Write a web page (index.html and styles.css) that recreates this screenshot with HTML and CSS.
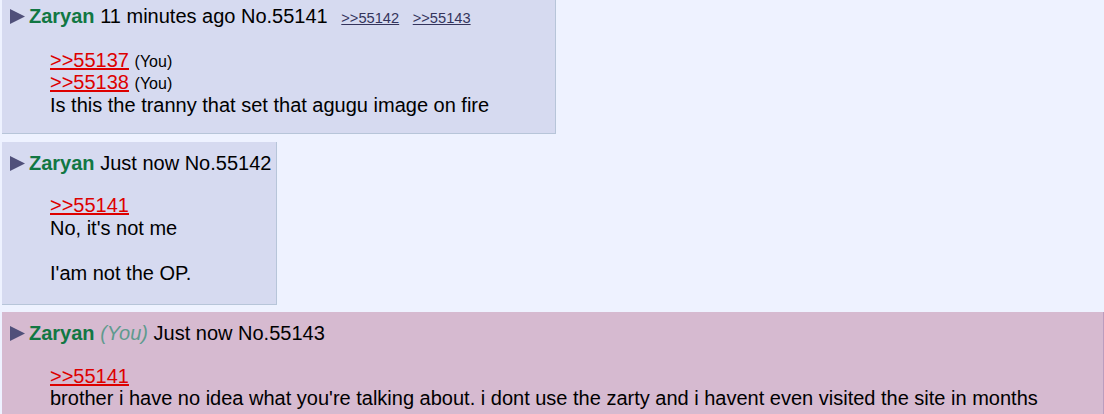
FILE: index.html
```html
<!DOCTYPE html>
<html lang="en">

<head>
    <meta charset="UTF-8">
    <meta name="viewport" content="width=device-width, initial-scale=1.0">
    <title>Thread</title>
    <link rel="stylesheet" href="styles.css">
</head>

<body>
    <div class="thread">
        <div class="post wide" id="p55141">
            <div class="post-info">
                <svg class="arrow" width="15" height="15" viewBox="0 0 15 15"><polygon points="0,0 15,7.5 0,15" /></svg><span class="name">Zaryan</span> 11 minutes ago <span class="post-no">No.55141</span>
                <a class="backlink" href="#p55142">&gt;&gt;55142</a>
                <a class="backlink" href="#p55143">&gt;&gt;55143</a>
            </div>
            <blockquote class="message">
                <a class="quotelink" href="#p55137">&gt;&gt;55137</a> <span class="you">(You)</span><br>
                <a class="quotelink" href="#p55138">&gt;&gt;55138</a> <span class="you">(You)</span><br>
                Is this the tranny that set that agugu image on fire
            </blockquote>
        </div>

        <div class="post" id="p55142">
            <div class="post-info">
                <svg class="arrow" width="15" height="15" viewBox="0 0 15 15"><polygon points="0,0 15,7.5 0,15" /></svg><span class="name">Zaryan</span> Just now <span class="post-no">No.55142</span>
            </div>
            <blockquote class="message">
                <a class="quotelink" href="#p55141">&gt;&gt;55141</a><br>
                No, it's not me<br>
                <br>
                I'am not the OP.
            </blockquote>
        </div>

        <div class="post highlight" id="p55143">
            <div class="post-info">
                <svg class="arrow" width="15" height="15" viewBox="0 0 15 15"><polygon points="0,0 15,7.5 0,15" /></svg><span class="name">Zaryan</span> <span class="name-you">(You)</span> Just now <span class="post-no">No.55143</span>
            </div>
            <blockquote class="message">
                <a class="quotelink" href="#p55141">&gt;&gt;55141</a><br>
                brother i have no idea what you're talking about. i dont use the zarty and i havent even visited the site in months
            </blockquote>
        </div>
    </div>
</body>

</html>
```

FILE: styles.css
```css
body {
    font-family: "Liberation Sans", Arial, sans-serif;
    font-size: 20px;
    line-height: 22.5px;
    color: #000;
    background-color: #eef2ff;
    margin: 0;
    padding: 0;
    overflow: hidden;
}

.thread {
    margin-top: -5px;
    padding-left: 2px;
}

.post {
    display: table;
    background-color: #d6daf0;
    border-right: 1px solid #b7c5d9;
    border-bottom: 1px solid #b7c5d9;
    padding: 10px 5px 0 8px;
    margin-bottom: 7.5px;
}

.post.highlight {
    display: block;
    background-color: #d6bad0;
    border-color: #ba9dbf;
}

.arrow {
    fill: #50507a;
    margin-right: 4px;
    vertical-align: -1px;
}

.name {
    color: #117743;
    font-weight: bold;
}

.name-you {
    color: #5f9a8e;
    font-style: italic;
}

.backlink {
    color: #34345c;
    font-size: 14.67px;
    line-height: 1;
    margin-left: 8px;
}

.message {
    margin: 20px 40px 19.5px 40px;
}

/* first post is a bit wider than its text */
.post.wide .message {
    margin: 21px 61px 17px 40px;
}

.quotelink {
    color: #dd0000;
}

.you {
    font-size: 16px;
    line-height: 1;
}
```
